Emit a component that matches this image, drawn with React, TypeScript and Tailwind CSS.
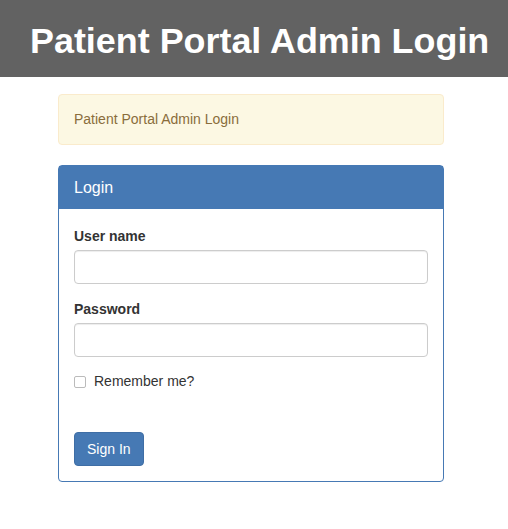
export default function App() {
  return (
    <div className="min-h-screen bg-white font-['Liberation_Sans',Arial,sans-serif] text-[#333]">
      {/* top banner */}
      <div className="h-[77px] bg-[#626262] flex items-center pl-[30px] pt-[6px]">
        <h1 className="text-[35.9px] font-bold text-white leading-none">Patient Portal Admin Login</h1>
      </div>

      <div className="ml-[58px] w-[386px] pt-[17px]">
        {/* warning alert */}
        <div className="h-[51px] flex items-center px-[15px] bg-[#fcf8e3] border border-[#faebcc] rounded text-[#8a6d3b] text-[14px]">
          Patient Portal Admin Login
        </div>

        {/* login panel */}
        <div className="mt-[20px] border border-[#4679b4] rounded">
          <div className="h-[43px] flex items-center px-[15px] bg-[#4679b4] text-white text-[16px]">Login</div>
          <div className="px-[15px] pt-[17px] pb-[15px]">
            <label className="block text-[14px] font-bold mb-[3px]">User name</label>
            <input className="block w-full h-[34px] border border-[#ccc] rounded shadow-[inset_0_1px_1px_rgba(0,0,0,0.075)]" />
            <label className="block text-[14px] font-bold mt-[15px] mb-[3px]">Password</label>
            <input type="password" className="block w-full h-[34px] border border-[#ccc] rounded shadow-[inset_0_1px_1px_rgba(0,0,0,0.075)]" />
            <label className="flex items-center gap-[8px] mt-[14px] text-[14px]">
              <span className="w-[12px] h-[12px] border border-[#bbb] rounded-[2px] bg-white" />
              Remember me?
            </label>
            <button className="mt-[40px] h-[34px] px-[12px] bg-[#4679b4] border border-[#3f6ea5] rounded text-white text-[14px]">
              Sign In
            </button>
          </div>
        </div>
      </div>
    </div>
  );
}
